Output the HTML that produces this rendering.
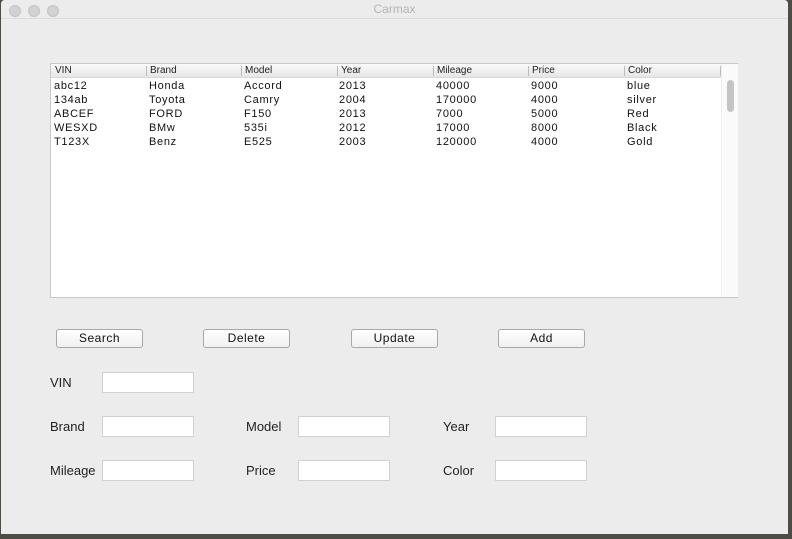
<!DOCTYPE html>
<html><head><style>
body{margin:0;width:792px;height:539px;background:#4d4c45;position:relative;overflow:hidden;font-family:"Liberation Sans",sans-serif;}
.win{position:absolute;left:1px;top:0;width:787px;height:534px;background:#ececec;border-radius:4px 4px 0 0;}
.title{position:absolute;left:0;top:0;width:787px;height:18px;border-bottom:1px solid #dcdcdc;background:#ececec;border-radius:4px 4px 0 0;text-align:center;font-size:12px;line-height:19px;color:#b4b4b4;}
.dot{position:absolute;top:5px;width:10px;height:10px;border-radius:50%;background:#d2d2d2;border:0.5px solid #c4c4c4;}
.table{position:absolute;left:50px;top:63px;width:686px;height:233px;background:#fff;border:1px solid #c8c8c8;}
.hdr{position:absolute;left:0;top:0;width:670px;height:13px;background:linear-gradient(#fafafa,#e6e6e6);border-bottom:1px solid #d8d8d8;}
.c{position:absolute;font-size:11px;color:#111;white-space:nowrap;}
.h{font-size:10px;color:#222;top:1px;}
.sep{position:absolute;top:2px;width:1px;height:10px;background:#bbb;}
.sb{position:absolute;left:670px;top:0;width:16px;height:233px;background:#fafafa;border-left:1px solid #eee;}
.th{position:absolute;left:5px;top:16px;width:7px;height:32px;border-radius:4px;background:#c4c4c4;}
.btn{position:absolute;top:329px;width:85px;height:17px;border:1px solid #a8a8a8;border-radius:3px;background:linear-gradient(#fff,#f0f0f0);font-size:12px;text-align:center;line-height:17px;color:#111;letter-spacing:0.5px;}
.lbl{position:absolute;font-size:13px;color:#222;}
.f{position:absolute;width:90px;height:19px;background:#fff;border:1px solid #d0d0d0;}
</style></head><body>
<div class="win">
<div class="title">Carmax
<div class="dot" style="left:8px"></div><div class="dot" style="left:27px"></div><div class="dot" style="left:46px"></div></div>
</div>
<div class="table">
<div class="hdr">
<span class="c h" style="left:4px">VIN</span>
<div class="sep" style="left:95px"></div><span class="c h" style="left:99px">Brand</span>
<div class="sep" style="left:190px"></div><span class="c h" style="left:194px">Model</span>
<div class="sep" style="left:286px"></div><span class="c h" style="left:290px">Year</span>
<div class="sep" style="left:382px"></div><span class="c h" style="left:386px">Mileage</span>
<div class="sep" style="left:477px"></div><span class="c h" style="left:481px">Price</span>
<div class="sep" style="left:573px"></div><span class="c h" style="left:577px">Color</span>
<div class="sep" style="left:669px"></div>
</div>
<div style="position:absolute;top:16px;left:0;letter-spacing:0.7px">
<div class="c" style="left:3px;top:0">abc12</div><div class="c" style="left:98px;top:0">Honda</div><div class="c" style="left:193px;top:0">Accord</div><div class="c" style="left:288px;top:0">2013</div><div class="c" style="left:385px;top:0">40000</div><div class="c" style="left:480px;top:0">9000</div><div class="c" style="left:576px;top:0">blue</div>
<div class="c" style="left:3px;top:14px">134ab</div><div class="c" style="left:98px;top:14px">Toyota</div><div class="c" style="left:193px;top:14px">Camry</div><div class="c" style="left:288px;top:14px">2004</div><div class="c" style="left:385px;top:14px">170000</div><div class="c" style="left:480px;top:14px">4000</div><div class="c" style="left:576px;top:14px">silver</div>
<div class="c" style="left:3px;top:28px">ABCEF</div><div class="c" style="left:98px;top:28px">FORD</div><div class="c" style="left:193px;top:28px">F150</div><div class="c" style="left:288px;top:28px">2013</div><div class="c" style="left:385px;top:28px">7000</div><div class="c" style="left:480px;top:28px">5000</div><div class="c" style="left:576px;top:28px">Red</div>
<div class="c" style="left:3px;top:42px">WESXD</div><div class="c" style="left:98px;top:42px">BMw</div><div class="c" style="left:193px;top:42px">535i</div><div class="c" style="left:288px;top:42px">2012</div><div class="c" style="left:385px;top:42px">17000</div><div class="c" style="left:480px;top:42px">8000</div><div class="c" style="left:576px;top:42px">Black</div>
<div class="c" style="left:3px;top:56px">T123X</div><div class="c" style="left:98px;top:56px">Benz</div><div class="c" style="left:193px;top:56px">E525</div><div class="c" style="left:288px;top:56px">2003</div><div class="c" style="left:385px;top:56px">120000</div><div class="c" style="left:480px;top:56px">4000</div><div class="c" style="left:576px;top:56px">Gold</div>
</div>
<div class="sb"><div class="th"></div></div>
</div>
<div class="btn" style="left:56px">Search</div>
<div class="btn" style="left:203px">Delete</div>
<div class="btn" style="left:351px">Update</div>
<div class="btn" style="left:498px">Add</div>
<div class="lbl" style="left:50px;top:375px">VIN</div><div class="f" style="left:102px;top:372px"></div>
<div class="lbl" style="left:50px;top:419px">Brand</div><div class="f" style="left:102px;top:416px"></div>
<div class="lbl" style="left:246px;top:419px">Model</div><div class="f" style="left:298px;top:416px"></div>
<div class="lbl" style="left:443px;top:419px">Year</div><div class="f" style="left:495px;top:416px"></div>
<div class="lbl" style="left:50px;top:463px">Mileage</div><div class="f" style="left:102px;top:460px"></div>
<div class="lbl" style="left:246px;top:463px">Price</div><div class="f" style="left:298px;top:460px"></div>
<div class="lbl" style="left:443px;top:463px">Color</div><div class="f" style="left:495px;top:460px"></div>
</body></html>
